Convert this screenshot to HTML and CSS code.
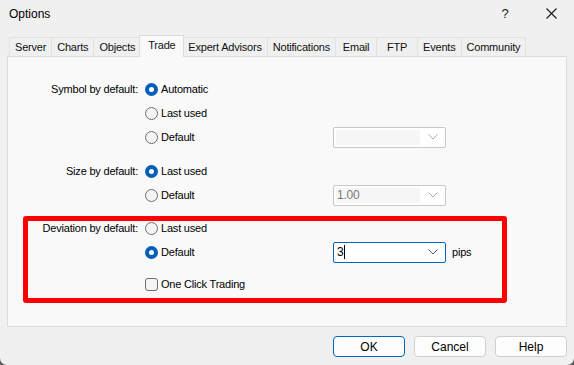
FILE: index.html
```html
<!DOCTYPE html>
<html>
  <head>
    <meta charset="UTF-8">
    <title>Options</title>
    <link rel="stylesheet" href="styles.css">
  </head>
  <body>
    <div class="window">

      <div class="titlebar">
        <span class="title">Options</span>
        <span class="caption-btn help">?</span>
        <span class="caption-btn close">
          <svg width="11" height="11" viewBox="0 0 11 11"><path d="M0.5 0.5 L10.5 10.5 M10.5 0.5 L0.5 10.5" stroke="#1a1a1a" stroke-width="1.1" fill="none"/></svg>
        </span>
      </div>

      <div class="tabs">
        <span class="tab">Server</span>
        <span class="tab">Charts</span>
        <span class="tab">Objects</span>
        <span class="tab selected">Trade</span>
        <span class="tab">Expert Advisors</span>
        <span class="tab">Notifications</span>
        <span class="tab">Email</span>
        <span class="tab">FTP</span>
        <span class="tab">Events</span>
        <span class="tab">Community</span>
      </div>

      <div class="panel">
        <div class="group">
          <div class="row">
            <span class="label">Symbol by default:</span>
            <span class="opt"><span class="radio checked"></span>Automatic</span>
          </div>
          <div class="row">
            <span class="label"></span>
            <span class="opt"><span class="radio"></span>Last used</span>
          </div>
          <div class="row">
            <span class="label"></span>
            <span class="opt"><span class="radio"></span>Default</span>
            <span class="combo disabled">
              <span class="value"></span>
              <svg class="chevron" width="10" height="6" viewBox="0 0 10 6"><path d="M0.5 0.5 L5 5 L9.5 0.5" stroke="#a8a8a8" fill="none"/></svg>
            </span>
          </div>
        </div>

        <div class="group size">
          <div class="row">
            <span class="label">Size by default:</span>
            <span class="opt"><span class="radio checked"></span>Last used</span>
          </div>
          <div class="row">
            <span class="label"></span>
            <span class="opt"><span class="radio"></span>Default</span>
            <span class="combo disabled">
              <span class="value">1.00</span>
              <svg class="chevron" width="10" height="6" viewBox="0 0 10 6"><path d="M0.5 0.5 L5 5 L9.5 0.5" stroke="#a8a8a8" fill="none"/></svg>
            </span>
          </div>
        </div>

        <div class="group deviation">
          <div class="row">
            <span class="label">Deviation by default:</span>
            <span class="opt"><span class="radio"></span>Last used</span>
          </div>
          <div class="row">
            <span class="label"></span>
            <span class="opt"><span class="radio checked"></span>Default</span>
            <span class="combo active">
              <span class="value">3<span class="caret"></span></span>
              <svg class="chevron" width="10" height="6" viewBox="0 0 10 6"><path d="M0.5 0.5 L5 5 L9.5 0.5" stroke="#5a5a5a" fill="none"/></svg>
            </span>
            <span class="unit">pips</span>
          </div>
          <div class="row one-click">
            <span class="label"></span>
            <span class="opt"><span class="checkbox"></span>One Click Trading</span>
          </div>
        </div>

        <div class="highlight"></div>
      </div>

      <div class="buttons">
        <span class="btn default">OK</span>
        <span class="btn">Cancel</span>
        <span class="btn">Help</span>
      </div>

    </div>
  </body>
</html>
```

FILE: styles.css
```css
html, body {
  margin: 0;
  padding: 0;
  width: 100%;
  height: 100%;
}

body {
  background: #5f5f5f;
  font-family: "Liberation Sans", Arial, sans-serif;
  font-size: 11px;
  letter-spacing: -0.2px;
  color: #000;
}

.window {
  width: 574px;
  height: 365px;
  background: #f0f0f0;
  border-radius: 0 0 7px 7px;
  overflow: hidden;
}

/* title bar */

.titlebar {
  height: 27px;
  display: flex;
  align-items: center;
}

.title {
  flex: 1;
  padding-left: 9px;
  font-size: 12px;
  letter-spacing: 0;
}

.caption-btn {
  width: 46px;
  height: 27px;
  display: flex;
  align-items: center;
  justify-content: center;
}

.help {
  font-size: 13px;
  color: #1a1a1a;
}

/* tabs */

.tabs {
  margin-top: 8px;
  height: 21px;
  padding-left: 9px;
  display: flex;
  align-items: flex-end;
}

.tab {
  box-sizing: border-box;
  height: 19px;
  min-width: 42px;
  padding: 0 5px;
  display: flex;
  align-items: center;
  justify-content: center;
  border: 1px solid #e2e2e2;
  border-bottom: none;
  margin-right: -1px;
  background: #f0f0f0;
  color: #111;
}

.tab.selected {
  height: 22px;
  margin: 0 -2px -1px -1px;
  padding-bottom: 3px;
  position: relative;
  z-index: 1;
  background: #f9f9f9;
  border-color: #dcdcdc;
  min-width: 45px;
}

/* panel */

.panel {
  position: relative;
  box-sizing: border-box;
  margin: 0 7px;
  height: 271px;
  padding-top: 20px;
  background: #f9f9f9;
  border: 1px solid #dcdcdc;
}

.row {
  height: 24px;
  display: grid;
  grid-template-columns: 137px 188px 113px auto;
  align-items: center;
}

.label {
  text-align: right;
  padding-right: 7px;
}

.opt {
  display: flex;
  align-items: center;
}

.radio {
  box-sizing: border-box;
  width: 13px;
  height: 13px;
  margin-right: 3px;
  border-radius: 50%;
  border: 1px solid #6e6e6e;
  background: #f4f4f4;
}

.radio.checked {
  border: 4px solid #005fb8;
  background: #fff;
}

.checkbox {
  box-sizing: border-box;
  width: 13px;
  height: 13px;
  margin-right: 3px;
  border-radius: 3px;
  border: 1px solid #6e6e6e;
  background: #f4f4f4;
}

.group.size {
  margin-top: 10px;
}

.group.deviation {
  margin-top: 9px;
}

.row.one-click {
  margin-top: 8px;
}

/* combo boxes */

.combo {
  box-sizing: border-box;
  height: 21px;
  display: flex;
  align-items: center;
  padding: 2px 7px 2px 2px;
  background: #fff;
  border: 1px solid #c8c8c8;
  border-radius: 2px;
}

.combo .value {
  flex: 1;
  height: 15px;
  line-height: 15px;
  margin-right: 8px;
  padding-left: 1px;
  font-size: 12px;
}

.combo.disabled .value {
  background: #f6f6f6;
  color: #7a7a7a;
}

.combo.active {
  border-color: #0067c0;
}

.caret {
  display: inline-block;
  width: 1px;
  height: 14px;
  margin-left: 1px;
  vertical-align: top;
  background: #000;
}

.unit {
  padding-left: 6px;
}

/* annotation */

.highlight {
  position: absolute;
  left: 15px;
  top: 159px;
  box-sizing: border-box;
  width: 484px;
  height: 87px;
  border: 5px solid #ff0000;
  border-radius: 3px;
}

/* buttons */

.buttons {
  margin-top: 9px;
  padding-right: 7px;
  display: flex;
  justify-content: flex-end;
  gap: 9px;
}

.btn {
  box-sizing: border-box;
  width: 72px;
  height: 21px;
  display: flex;
  align-items: center;
  justify-content: center;
  background: #fdfdfd;
  border: 1px solid #d0d0d0;
  border-radius: 4px;
  font-size: 12px;
  letter-spacing: 0;
}

.btn.default {
  border-color: #0067c0;
}
```
